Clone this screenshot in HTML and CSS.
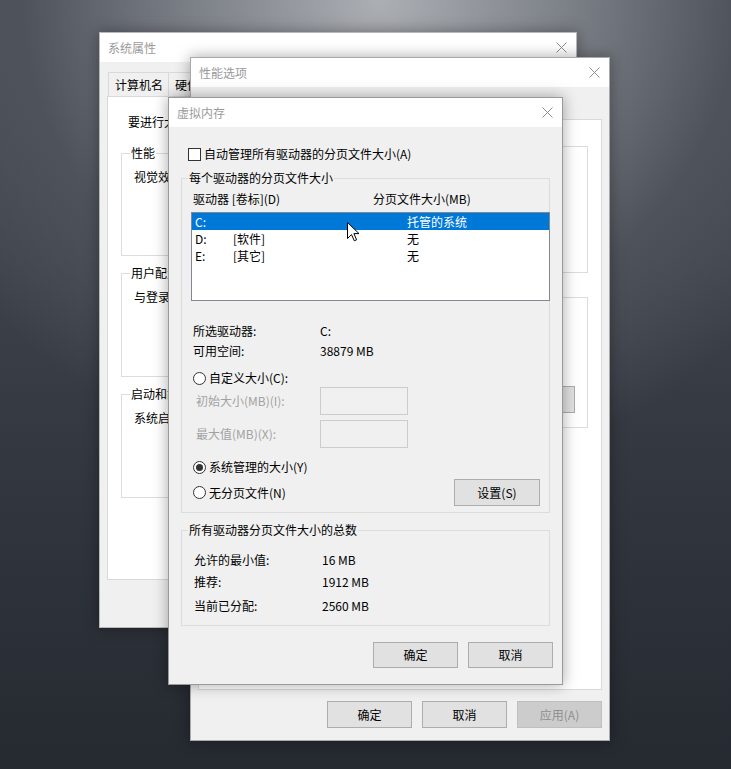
FILE: index.html
```html
<!DOCTYPE html>
<html lang="zh-CN">
<head>
<meta charset="utf-8">
<title>虚拟内存</title>
<link rel="stylesheet" href="styles.css">
</head>
<body>
<div class="desk">

  <section class="win win-sys">
    <header class="tb"><span class="tt">系统属性</span><span class="cx"><svg width="11" height="11" viewBox="0 0 11 11"><path d="M0.5 0.5L10.5 10.5M10.5 0.5L0.5 10.5" stroke="#8c8c8c" stroke-width="1" fill="none"/></svg></span></header>
    <div class="sys-body">
      <div class="tabs">
        <span class="tab">计算机名</span><span class="tab">硬件</span>
      </div>
      <div class="sys-panel">
        <p class="sys-note">要进行大</p>
        <fieldset class="grp sys-grp"><legend>性能</legend><p class="sys-txt">视觉效果</p></fieldset>
        <fieldset class="grp sys-grp"><legend>用户配置</legend><p class="sys-txt">与登录帐户</p></fieldset>
        <fieldset class="grp sys-grp"><legend>启动和故障</legend><p class="sys-txt">系统启动</p></fieldset>
      </div>
    </div>
  </section>

  <section class="win win-perf">
    <header class="tb"><span class="tt">性能选项</span><span class="cx"><svg width="11" height="11" viewBox="0 0 11 11"><path d="M0.5 0.5L10.5 10.5M10.5 0.5L0.5 10.5" stroke="#8c8c8c" stroke-width="1" fill="none"/></svg></span></header>
    <div class="perf-body">
      <div class="perf-tabs"></div>
      <div class="perf-panel">
        <div class="grp perf-grp1"></div>
        <div class="grp perf-grp2">
          <div class="perf-btnrow"><span class="btn"></span></div>
        </div>
      </div>
      <div class="btnrow perf-btns">
        <span class="btn btn-tall">确定</span><span class="btn btn-tall">取消</span><span class="btn btn-tall btn-dis">应用(A)</span>
      </div>
    </div>
  </section>

  <section class="win win-vm">
    <header class="tb"><span class="tt">虚拟内存</span><span class="cx"><svg width="11" height="11" viewBox="0 0 11 11"><path d="M0.5 0.5L10.5 10.5M10.5 0.5L0.5 10.5" stroke="#8c8c8c" stroke-width="1" fill="none"/></svg></span></header>
    <div class="vm-body">
      <div class="chkrow"><span class="chk"></span><span>自动管理所有驱动器的分页文件大小(A)</span></div>

      <fieldset class="grp vm-grp1">
        <legend>每个驱动器的分页文件大小</legend>
        <div class="hdr"><span class="hdr-c1">驱动器 [卷标](D)</span><span>分页文件大小(MB)</span></div>
        <div class="lst">
          <div class="lr sel"><span class="c1">C:</span><span class="c2"></span><span>托管的系统</span></div>
          <div class="lr"><span class="c1">D:</span><span class="c2">[软件]</span><span>无</span></div>
          <div class="lr"><span class="c1">E:</span><span class="c2">[其它]</span><span>无</span></div>
        </div>
        <div class="kv kv-first"><span class="k">所选驱动器:</span><span>C:</span></div>
        <div class="kv"><span class="k">可用空间:</span><span>38879 MB</span></div>
        <div class="rrow rrow-custom"><span class="rb"></span><span>自定义大小(C):</span></div>
        <div class="inrow inrow-1"><span class="inlab">初始大小(MB)(I):</span><span class="edit"></span></div>
        <div class="inrow inrow-2"><span class="inlab">最大值(MB)(X):</span><span class="edit"></span></div>
        <div class="rrow rrow-sys"><span class="rb rb-on"></span><span>系统管理的大小(Y)</span></div>
        <div class="lastrow"><div class="rrow"><span class="rb"></span><span>无分页文件(N)</span></div><span class="btn btn-set">设置(S)</span></div>
      </fieldset>

      <fieldset class="grp vm-grp2">
        <legend>所有驱动器分页文件大小的总数</legend>
        <div class="tot"><span class="tk">允许的最小值:</span><span>16 MB</span></div>
        <div class="tot tot-2"><span class="tk">推荐:</span><span>1912 MB</span></div>
        <div class="tot tot-3"><span class="tk">当前已分配:</span><span>2560 MB</span></div>
      </fieldset>

      <div class="btnrow vm-btns"><span class="btn">确定</span><span class="btn">取消</span></div>
    </div>
  </section>

  <svg class="cursor" width="13" height="20" viewBox="0 0 13 20"><path d="M0.5 0.5L0.5 16.5L4.5 12.6L7.3 18.8L9.6 17.8L6.9 11.6L12 11.6Z" fill="#fff" stroke="#000" stroke-width="1" stroke-linejoin="miter"/></svg>
</div>
</body>
</html>
```

FILE: styles.css
```css
* { box-sizing: border-box; }
html, body { margin: 0; padding: 0; }
body {
  width: 731px;
  height: 769px;
  overflow: hidden;
  font-family: "Noto Sans CJK SC", "Noto Sans", sans-serif;
  font-size: 12px;
  line-height: 16px;
  color: #000;
}
.desk {
  position: relative;
  width: 731px;
  height: 769px;
  background:
    radial-gradient(ellipse 70% 62% at 52% 0%, rgba(172,175,180,1) 0%, rgba(126,130,137,1) 35%, rgba(78,82,90,1) 70%, rgba(78,82,90,0) 100%),
    linear-gradient(#4d515a 0%, #33373f 60%, #252930 100%);
}
p { margin: 0; }

.win {
  position: absolute;
  display: flex;
  flex-direction: column;
  background: #f0f0f0;
  border: 1px solid #a9a9a9;
  box-shadow: 0 0 14px rgba(0,0,0,0.35);
}
.win-sys { left: 99px; top: 32px; width: 478px; height: 596px; border-color: #b8b8b8; }
.win-perf { left: 190px; top: 57px; width: 420px; height: 684px; }
.win-vm { left: 168px; top: 97px; width: 395px; height: 588px; border-color: #9a9a9a; }

.tb {
  height: 29px;
  flex: none;
  background: #fff;
  display: flex;
  align-items: center;
  justify-content: space-between;
  padding-left: 8px;
}
.tt { color: #9a9a9a; }
.cx { width: 30px; height: 29px; display: flex; align-items: center; justify-content: center; }

/* tabs */
.tabs { display: flex; height: 24px; padding-left: 1px; }
.tab {
  height: 24px;
  padding: 0 5px 0 6px;
  border: 1px solid #d9d9d9;
  border-bottom: none;
  margin-right: -1px;
  display: flex;
  align-items: center;
  background: #f0f0f0;
}

/* system properties */
.sys-body { padding: 10px 7px 0 7px; display: flex; flex-direction: column; }
.sys-panel {
  height: 484px;
  background: #fff;
  border: 1px solid #d9d9d9;
  padding: 17px 14px 0 13px;
}
.sys-note { padding-left: 7px; height: 16px; }
.grp {
  margin: 0;
  min-width: 0;
  border: 1px solid #dcdcdc;
}
.grp legend { padding: 0 1px; line-height: 16px; }
.sys-grp { height: 112px; margin-top: 9px; padding: 8px 10px 0 12px; }
.sys-grp:first-of-type { margin-top: 15px; height: 111px; }
.sys-grp legend { margin-left: -4px; }
.sys-txt { height: 16px; }

/* performance options */
.perf-body { padding: 8px 7px 0 7px; display: flex; flex-direction: column; }
.perf-tabs { height: 24px; }
.perf-panel {
  height: 571px;
  background: #fff;
  border: 1px solid #d9d9d9;
  padding: 26px 13px 0 13px;
}
.perf-grp1 { height: 127px; }
.perf-grp2 { height: 131px; margin-top: 24px; padding: 88px 12px 0 12px; }
.perf-btnrow { display: flex; justify-content: flex-end; }
.perf-btnrow .btn { height: 27px; }
.perf-btns { margin-top: 11px; margin-right: 0; }

/* buttons */
.btnrow { display: flex; justify-content: flex-end; gap: 10px; }
.btn {
  width: 85px;
  height: 26px;
  background: #e1e1e1;
  border: 1px solid #adadad;
  display: flex;
  align-items: center;
  justify-content: center;
  color: #000;
}
.btn-tall { height: 27px; }
.btn-dis { background: #cccccc; border-color: #bfbfbf; color: #8f8f8f; }

/* virtual memory */
.vm-body { padding: 0 12px; display: flex; flex-direction: column; }
.chkrow { margin-top: 19px; height: 16px; display: flex; align-items: center; padding-left: 7px; }
.chk { width: 13px; height: 13px; border: 1px solid #333; background: #fff; margin-right: 3px; flex: none; }

.vm-grp1 { margin-top: 8px; height: 343px; padding: 5px 8px 6px 11px; }
.vm-grp1 legend { margin-left: -5px; }
.hdr { height: 16px; display: flex; align-items: center; }
.hdr-c1 { width: 180px; }
.lst {
  margin-top: 5px;
  margin-left: -2px;
  margin-right: -9px;
  height: 89px;
  background: #fff;
  border: 1px solid #828790;
}
.lr { height: 17px; display: flex; align-items: center; padding-left: 3px; }
.lr.sel { background: #0078d7; color: #fff; }
.c1 { width: 38px; }
.c2 { width: 174px; }

.kv { height: 20px; display: flex; align-items: center; }
.kv-first { margin-top: 20px; }
.k { width: 127px; }

.rrow { height: 16px; display: flex; align-items: center; }
.rrow-custom { margin-top: 9px; }
.rrow-sys { margin-top: 11px; }
.rb {
  width: 13px;
  height: 13px;
  border: 1px solid #333;
  border-radius: 50%;
  background: #fff;
  margin-right: 3px;
  flex: none;
  display: flex;
  align-items: center;
  justify-content: center;
}
.rb-on::after {
  content: "";
  width: 7px;
  height: 7px;
  border-radius: 50%;
  background: #333;
}

.inrow { height: 28px; display: flex; align-items: center; }
.inrow-1 { margin-top: 1px; }
.inrow-2 { margin-top: 5px; }
.inlab { width: 127px; padding-left: 3px; color: #a2a2a2; }
.edit { width: 88px; height: 28px; border: 1px solid #cccccc; background: #f0f0f0; }

.lastrow { margin-top: 4px; height: 27px; display: flex; align-items: center; justify-content: space-between; }
.btn-set { width: 86px; height: 27px; margin-right: 1px; }

.vm-grp2 { margin-top: 9px; height: 104px; padding: 14px 10px 0 12px; }
.vm-grp2 legend { margin-left: -6px; }
.tot { height: 16px; display: flex; align-items: center; }
.tot-2 { margin-top: 6px; }
.tot-3 { margin-top: 8px; }
.tk { width: 128px; }

.vm-btns { margin-top: 16px; margin-right: -3px; }

.cursor { position: absolute; left: 347px; top: 222px; }
```
